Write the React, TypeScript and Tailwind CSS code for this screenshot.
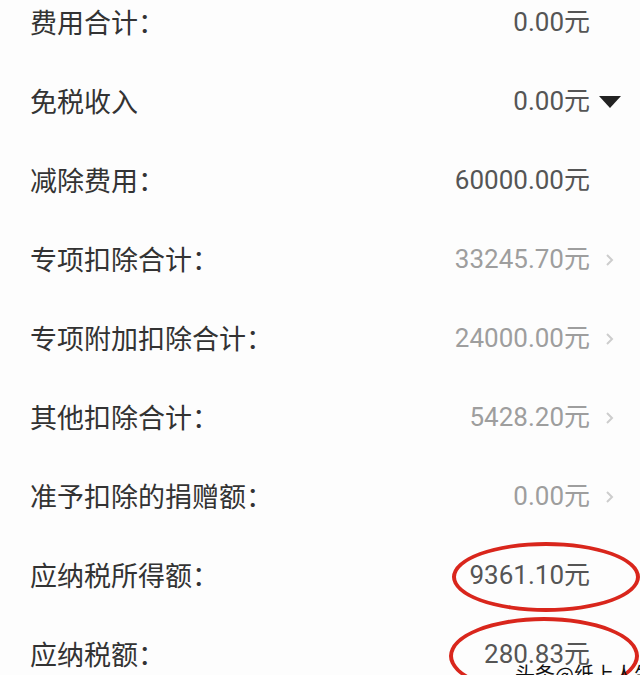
import React from "react";

type Row = {
  label: string;
  value: string;
  tone: "dark" | "light";
  accessory?: "chevron" | "caret";
};

const rows: Row[] = [
  { label: "费用合计：", value: "0.00元", tone: "dark" },
  { label: "免税收入", value: "0.00元", tone: "dark", accessory: "caret" },
  { label: "减除费用：", value: "60000.00元", tone: "dark" },
  { label: "专项扣除合计：", value: "33245.70元", tone: "light", accessory: "chevron" },
  { label: "专项附加扣除合计：", value: "24000.00元", tone: "light", accessory: "chevron" },
  { label: "其他扣除合计：", value: "5428.20元", tone: "light", accessory: "chevron" },
  { label: "准予扣除的捐赠额：", value: "0.00元", tone: "light", accessory: "chevron" },
  { label: "应纳税所得额：", value: "9361.10元", tone: "dark" },
  { label: "应纳税额：", value: "280.83元", tone: "dark" },
];

function Chevron() {
  return (
    <svg width="10" height="14" viewBox="0 0 10 14" className="ml-[15px]">
      <path d="M2 2 L7 7 L2 12" fill="none" stroke="#cdcdcd" strokeWidth="2" />
    </svg>
  );
}

function Caret() {
  return (
    <svg width="22" height="12" viewBox="0 0 22 12" className="ml-[9px]">
      <path d="M0 0 L22 0 L11 12 Z" fill="#222" />
    </svg>
  );
}

export default function App() {
  return (
    <div
      className="relative w-[640px] h-[675px] overflow-hidden bg-[#fdfdfd]"
      style={{ fontFamily: '"Noto Sans CJK SC", Roboto, "Noto Sans", sans-serif' }}
    >
      <div className="mt-[-17px] flex flex-col">
        {rows.map((r, i) => (
          <div key={i} className="h-[79px] flex items-center pl-[30px] pr-[50px]">
            <span className="text-[27px] text-[#333]">{r.label}</span>
            <div className="ml-auto flex items-center relative">
              <span
                className={
                  "text-[26px] " + (r.tone === "dark" ? "text-[#555]" : "text-[#9e9e9e]")
                }
                style={{ fontFamily: 'Roboto, "Noto Sans CJK SC", sans-serif' }}
              >
                {r.value}
              </span>
              {r.accessory === "chevron" && (
                <div className="absolute left-full top-1/2 -translate-y-1/2">
                  <Chevron />
                </div>
              )}
              {r.accessory === "caret" && (
                <div className="absolute left-full top-1/2 -translate-y-1/2 flex">
                  <Caret />
                </div>
              )}
            </div>
          </div>
        ))}
      </div>

      <div className="absolute left-[452px] top-[542px] w-[188px] h-[70px] rounded-[50%] border-[4px] border-[#d9261c]" />
      <div className="absolute left-[449px] top-[617px] w-[190px] h-[78px] rounded-[50%] border-[4px] border-[#d9261c]" />

      <div
        className="absolute left-[515px] top-[664px] text-[20px] leading-none text-[#111] whitespace-nowrap"
        style={{ fontFamily: '"Noto Sans CJK SC", sans-serif' }}
      >
        头条@纸上人生
      </div>
    </div>
  );
}
